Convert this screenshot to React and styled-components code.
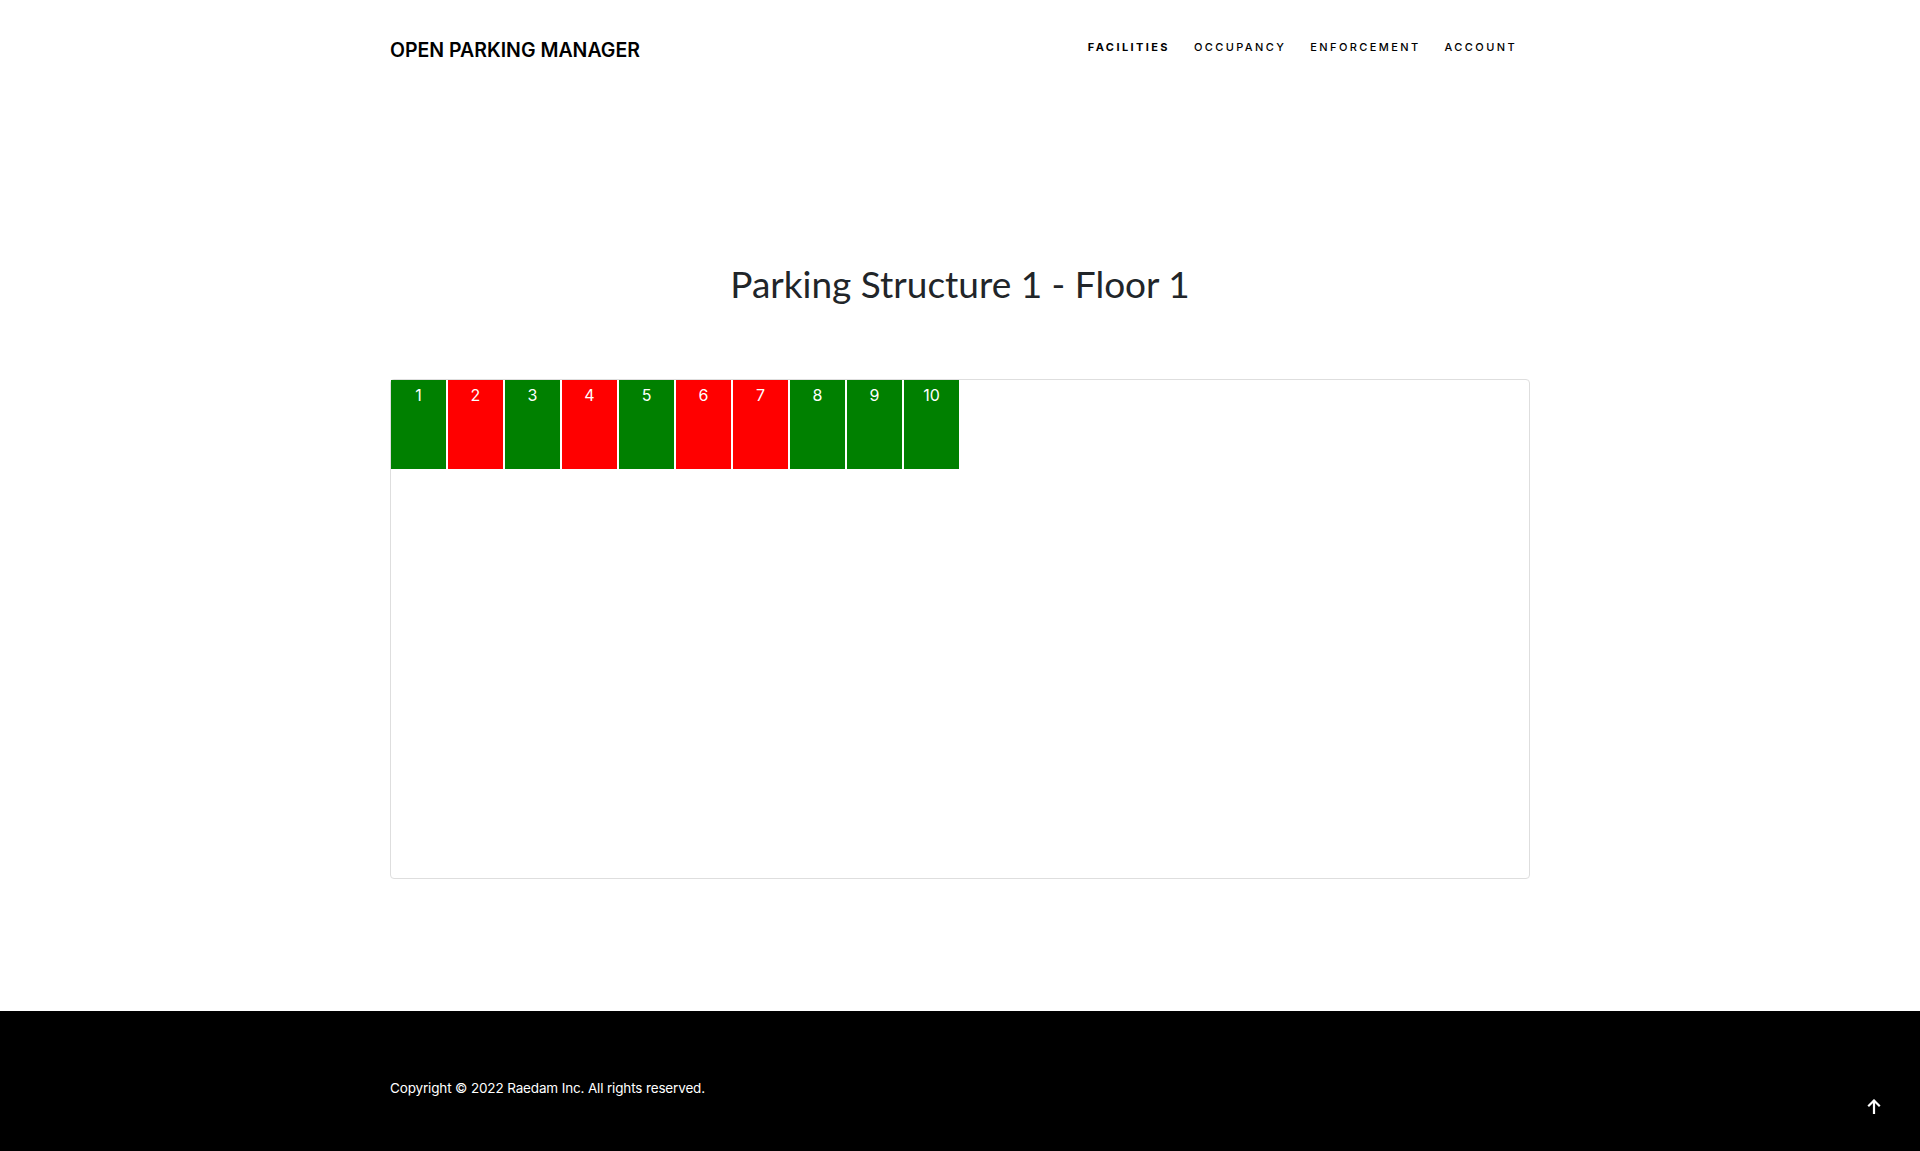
import React from "react";
import styled, { createGlobalStyle } from "styled-components";

const GlobalStyle = createGlobalStyle`
  body {
    margin: 0;
    font-family: "Inter", "Liberation Sans", sans-serif;
    background: #fff;
    color: #000;
  }
`;

const Container = styled.div`
  width: 1140px;
  margin: 0 auto;
`;

const HeaderBar = styled.header`
  height: 98px;
`;
const HeaderInner = styled(Container)`
  height: 100%;
  display: flex;
  justify-content: space-between;
  align-items: center;
`;
const Brand = styled.a`
  font-family: "Inter", sans-serif;
  font-size: 19.5px;
  font-weight: 600;
  color: #000;
  text-decoration: none;
  margin-top: 2px;
`;
const Nav = styled.nav`
  display: flex;
  gap: 24px;
  padding-right: 13px;
  margin-top: -4px;
`;
const NavLink = styled.a`
  font-family: "Inter", sans-serif;
  font-size: 11px;
  letter-spacing: 2.4px;
  text-transform: uppercase;
  font-weight: ${(p) => (p.$active ? 700 : 500)};
  color: #000;
  text-decoration: none;
`;

const Main = styled.main`
  padding-top: 164px;
  padding-bottom: 132px;
`;
const Title = styled.h1`
  margin: 0;
  text-align: center;
  font-family: "Lato", sans-serif;
  font-weight: 400;
  font-size: 37px;
  line-height: 1.2;
  color: #212529;
`;
const Floor = styled.div`
  margin-top: 73px;
  height: 500px;
  box-sizing: border-box;
  border: 1px solid #dedede;
  border-radius: 4px;
  display: flex;
  align-items: flex-start;
  gap: 2px;
`;
const Slot = styled.div`
  width: 55px;
  height: 89px;
  background: ${(p) => (p.$occupied ? "#ff0000" : "#008000")};
  color: #fff;
  font-family: "Inter", sans-serif;
  font-size: 16px;
  text-align: center;
  padding-top: 5px;
  box-sizing: border-box;
`;

const Footer = styled.footer`
  background: #000;
  color: #fff;
  height: 140px;
  box-sizing: border-box;
  padding-top: 69px;
`;
const Copy = styled.p`
  margin: 0;
  font-family: "Inter", sans-serif;
  font-size: 13.5px;
  letter-spacing: -0.15px;
`;
const ToTop = styled.button`
  position: fixed;
  right: 38px;
  bottom: 37px;
  background: none;
  border: 0;
  padding: 0;
  width: 16px;
  height: 16px;
  cursor: pointer;
  color: #fff;
`;

const slots = [
  { n: 1, occupied: false },
  { n: 2, occupied: true },
  { n: 3, occupied: false },
  { n: 4, occupied: true },
  { n: 5, occupied: false },
  { n: 6, occupied: true },
  { n: 7, occupied: true },
  { n: 8, occupied: false },
  { n: 9, occupied: false },
  { n: 10, occupied: false },
];

export default function App() {
  return (
    <>
      <GlobalStyle />
      <HeaderBar>
        <HeaderInner>
          <Brand href="#">OPEN PARKING MANAGER</Brand>
          <Nav>
            <NavLink href="#" $active>Facilities</NavLink>
            <NavLink href="#">Occupancy</NavLink>
            <NavLink href="#">Enforcement</NavLink>
            <NavLink href="#">Account</NavLink>
          </Nav>
        </HeaderInner>
      </HeaderBar>
      <Main>
        <Container>
          <Title>Parking Structure 1 - Floor 1</Title>
          <Floor>
            {slots.map((s) => (
              <Slot key={s.n} $occupied={s.occupied}>{s.n}</Slot>
            ))}
          </Floor>
        </Container>
      </Main>
      <Footer>
        <Container>
          <Copy>Copyright © 2022 Raedam Inc. All rights reserved.</Copy>
        </Container>
      </Footer>
      <ToTop title="back to top">
        <svg viewBox="0 0 16 16" width="16" height="16" fill="none" stroke="currentColor" strokeWidth="2.2" strokeLinecap="square">
          <path d="M8 15V3" />
          <path d="M3 7.5L8 2.5L13 7.5" />
        </svg>
      </ToTop>
    </>
  );
}
